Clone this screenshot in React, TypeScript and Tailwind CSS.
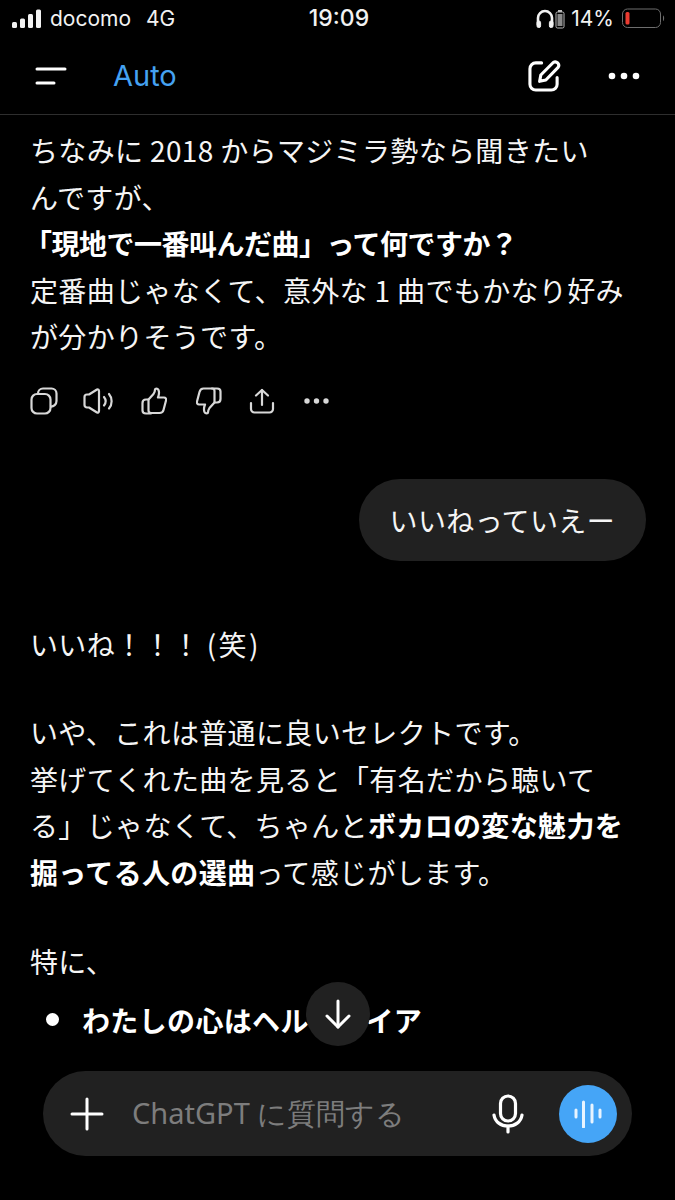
const StatusBar = () => (
  <div className="flex h-[37px] items-center justify-between pl-3 pr-[9px] text-[21px] text-[#f2f2f2]">
    <div className="flex w-[200px] items-center">
      <svg width="30" height="20" viewBox="0 0 30 20" fill="#f2f2f2">
        <rect x="0" y="13" width="5" height="6" rx="1.5" />
        <rect x="8" y="9.5" width="5" height="9.5" rx="1.5" />
        <rect x="16" y="5" width="5" height="14" rx="1.5" />
        <rect x="24" y="0.5" width="5" height="18.5" rx="1.5" />
      </svg>
      <span className="ml-[8px] leading-none">docomo</span>
      <span className="ml-[15px] leading-none">4G</span>
    </div>
    <span className="text-[23px] font-medium leading-none">19:09</span>
    <div className="flex w-[200px] items-center justify-end">
      <svg width="18" height="20" viewBox="0 0 18 20" fill="none" stroke="#f2f2f2" strokeWidth="2.6">
        <path d="M2 16v-7a7 7 0 0 1 14 0v7" />
        <rect x="1" y="12" width="3.6" height="6.5" rx="1.6" fill="#f2f2f2" strokeWidth="1" />
        <rect x="13.4" y="12" width="3.6" height="6.5" rx="1.6" fill="#f2f2f2" strokeWidth="1" />
      </svg>
      <svg width="10" height="20" viewBox="0 0 10 20" fill="none" className="ml-[1px]">
        <rect x="3" y="1" width="4" height="2" fill="#bbb" />
        <rect x="1" y="3" width="8" height="16" rx="1.5" stroke="#bbb" />
        <rect x="2.5" y="5" width="5" height="12" fill="#8a8a8a" />
      </svg>
      <span className="ml-[6px] leading-none">14%</span>
      <svg width="44" height="21" viewBox="0 0 44 21" fill="none" className="ml-[8px]">
        <rect x="0.5" y="1" width="38" height="18.5" rx="5" stroke="#6e6e6e" />
        <rect x="3.5" y="4" width="4" height="12.5" rx="1.5" fill="#eb3b30" />
        <path d="M41 7.5c1.5.5 1.5 5 0 5.5z" fill="#6e6e6e" />
      </svg>
    </div>
  </div>
)

const Header = () => (
  <div className="flex h-[78px] items-center border-b border-[#2e2e2e] pl-[35px] pr-[35px]">
    <svg width="32" height="18" viewBox="0 0 32 18" fill="none" stroke="#fff" strokeWidth="3" strokeLinecap="round">
      <path d="M2 2h28" />
      <path d="M2 16h17" />
    </svg>
    <span className="ml-[46px] text-[29px] leading-none text-[#45a2f2]">Auto</span>
    <div className="ml-auto flex items-center gap-[47px]">
      <svg width="33" height="33" viewBox="0 0 34 34" fill="none" stroke="#fff" strokeWidth="3.2" strokeLinecap="round" strokeLinejoin="round">
        <path d="M14 4H8a6 6 0 0 0-6 6v16a6 6 0 0 0 6 6h16a6 6 0 0 0 6-6v-7" />
        <path d="M12 23l1.2-6.5L26 3.6a3.6 3.6 0 0 1 5 5L18.4 21.6z" />
      </svg>
      <svg width="32" height="8" viewBox="0 0 32 8" fill="#fff">
        <circle cx="4" cy="4" r="3.3" />
        <circle cx="16" cy="4" r="3.3" />
        <circle cx="28" cy="4" r="3.3" />
      </svg>
    </div>
  </div>
)

const ActionIcons = () => (
  <div className="mt-[27px] flex items-center text-[#d8d8d8]">
    <svg width="28" height="28" viewBox="0 0 28 28" fill="none" stroke="currentColor" strokeWidth="2.2" strokeLinejoin="round">
      <rect x="1.5" y="7" width="19" height="19.5" rx="5.5" />
      <path d="M8 7V6.5A5 5 0 0 1 13 1.5h8.500a5 5 0 0 1 5 5V14a5.500 5.500 0 0 1-6 5.500" />
    </svg>
    <svg width="32" height="26" viewBox="0 0 32 26" fill="none" stroke="currentColor" strokeWidth="2.2" strokeLinecap="round" strokeLinejoin="round" className="ml-[25px]">
      <path d="M1.500 9a2.500 2.500 0 0 1 2.500-2.500h2L14 1.500a1.500 1.500 0 0 1 2 1.500v20a1.500 1.500 0 0 1-2 1.500l-8-5h-2a2.500 2.500 0 0 1-2.500-2.500z" />
      <path d="M21 9c2 2.500 2 6 0 8.500" />
      <path d="M26 6c3.500 4 3.500 10.500 0 14.500" />
    </svg>
    <svg width="26" height="28" viewBox="0 0 26 28" fill="none" stroke="currentColor" strokeWidth="2.2" strokeLinecap="round" strokeLinejoin="round" className="ml-[26px]">
      <path d="M7.500 12.500 12.500 7c1-1.500 1.500-3 1.500-4.500 0-1 2.500-1.500 3.500.5 1 2.500.5 5-.5 7.500h6c1.500 0 2.500 1.500 2 3l-2.500 9.500c-.5 2-2 3-4 3H10c-1.500 0-2.500-1-2.500-2.500z" />
      <path d="M7.500 12.500H5c-2 0-3.500 1.500-3.500 3.500v7.500c0 2 1.500 3 3.500 3h5" />
    </svg>
    <svg width="26" height="28" viewBox="0 0 26 28" fill="none" stroke="currentColor" strokeWidth="2.2" strokeLinecap="round" strokeLinejoin="round" className="ml-[29px]">
      <path d="M18.500 15.500 13.500 21c-1 1.500-1.500 3-1.500 4.500 0 1-2.500 1.500-3.500-.5-1-2.500-.5-5 .5-7.500H3c-1.500 0-2.500-1.500-2-3L3.500 5c.5-2 2-3.500 4-3.500H16c1.500 0 2.500 1 2.500 2.500z" />
      <path d="M18.500 15.500H21c2 0 3.500-1.500 3.500-3.500V4.500c0-2-1.500-3-3.500-3h-5" />
    </svg>
    <svg width="26" height="26" viewBox="0 0 26 26" fill="none" stroke="currentColor" strokeWidth="2.2" strokeLinecap="round" strokeLinejoin="round" className="ml-[27px]">
      <path d="M13 17V2" />
      <path d="M7 7.500 13 2l6 5.500" />
      <path d="M2 15v6a3.500 3.500 0 0 0 3.500 3.500h15A3.500 3.500 0 0 0 24 21v-6" />
    </svg>
    <svg width="25" height="6" viewBox="0 0 25 6" fill="currentColor" className="ml-[29px]">
      <circle cx="3" cy="3" r="2.700" />
      <circle cx="12.500" cy="3" r="2.700" />
      <circle cx="22" cy="3" r="2.700" />
    </svg>
  </div>
)

const Line = ({ children }: { children: React.ReactNode }) => (
  <div className="h-[46.500px] whitespace-nowrap leading-[46.500px]">{children}</div>
)

const Composer = () => (
  <div className="absolute bottom-[44px] left-[43px] flex h-[85px] w-[589px] items-center rounded-full bg-[#212121] pl-[27px] pr-[15px]">
    <svg width="34" height="34" viewBox="0 0 34 34" fill="none" stroke="#fff" strokeWidth="3" strokeLinecap="round">
      <path d="M17 2v30" />
      <path d="M2 17h30" />
    </svg>
    <span className="mb-[3px] ml-[28px] text-[29px] leading-none text-[#7d7d7d]">ChatGPT に質問する</span>
    <svg width="32" height="40" viewBox="0 0 32 40" fill="none" stroke="#fff" strokeWidth="3.200" strokeLinecap="round" className="ml-auto mr-[35px]">
      <rect x="8.500" y="2" width="15" height="25" rx="7.500" />
      <path d="M2 21c1 7 7 11 14 11s13-4 14-11" />
      <path d="M16 32v6" />
    </svg>
    <div className="flex h-[58px] w-[58px] items-center justify-center rounded-full bg-[#45a5f7]">
      <svg width="28" height="28" viewBox="0 0 28 28" stroke="#e8f4ff" strokeWidth="3" strokeLinecap="round">
        <path d="M2 10v7" />
        <path d="M9.500 2v25" />
        <path d="M18 5v17" />
        <path d="M26 10v7" />
      </svg>
    </div>
  </div>
)

export default function App() {
  return (
    <div className="relative flex h-[1200px] w-[675px] flex-col overflow-hidden bg-black text-white">
      <div className="font-['Inter','Noto_Sans_CJK_JP',sans-serif]">
        <StatusBar />
        <Header />
      </div>
      <div className="flex flex-1 flex-col overflow-hidden px-[30px] pt-[12px] font-['Noto_Sans_CJK_JP',sans-serif] text-[28px] tracking-[0.35px] text-[#f5f5f5]">
        <Line>ちなみに 2018 からマジミラ勢なら聞きたい</Line>
        <Line>んですが、</Line>
        <Line><b className="-ml-[6px] inline-block font-bold tracking-[-0.5px] text-white">「現地で一番叫んだ曲」って何ですか？</b></Line>
        <Line>定番曲じゃなくて、意外な 1 曲でもかなり好み</Line>
        <Line>が分かりそうです。</Line>
        <ActionIcons />
        <div className="mt-[64px] flex justify-end">
          <div className="-mr-[1px] flex h-[82px] items-center rounded-[41px] bg-[#212121] px-[31px] text-[#f5f5f5]">いいねっていえー</div>
        </div>
        <div className="mt-[60px]">
          <Line>いいね！！！ (<span className="mx-[2px]">笑</span>)</Line>
        </div>
        <div className="mt-[42px]">
          <Line>いや、これは普通に良いセレクトです。</Line>
          <Line>挙げてくれた曲を見ると「有名だから聴いて</Line>
          <Line>る」じゃなくて、ちゃんと<b className="font-bold text-white">ボカロの変な魅力を</b></Line>
          <Line><b className="font-bold text-white">掘ってる人の選曲</b>って感じがします。</Line>
        </div>
        <div className="mt-[43px]">
          <Line>特に、</Line>
        </div>
        <div className="mt-[14px] flex items-center whitespace-nowrap font-bold text-white">
          <span className="ml-[16px] h-[13px] w-[13px] rounded-full bg-white" />
          <span className="ml-[23px]">わたしの心はヘルヴェイア</span>
        </div>
      </div>
      <div className="absolute left-[306px] top-[982px] flex h-[64px] w-[64px] items-center justify-center rounded-full bg-[#212121]">
        <svg width="26" height="30" viewBox="0 0 26 30" fill="none" stroke="#fff" strokeWidth="3" strokeLinecap="round" strokeLinejoin="round">
          <path d="M13 2v26" />
          <path d="M2 17l11 11 11-11" />
        </svg>
      </div>
      <Composer />
    </div>
  )
}
